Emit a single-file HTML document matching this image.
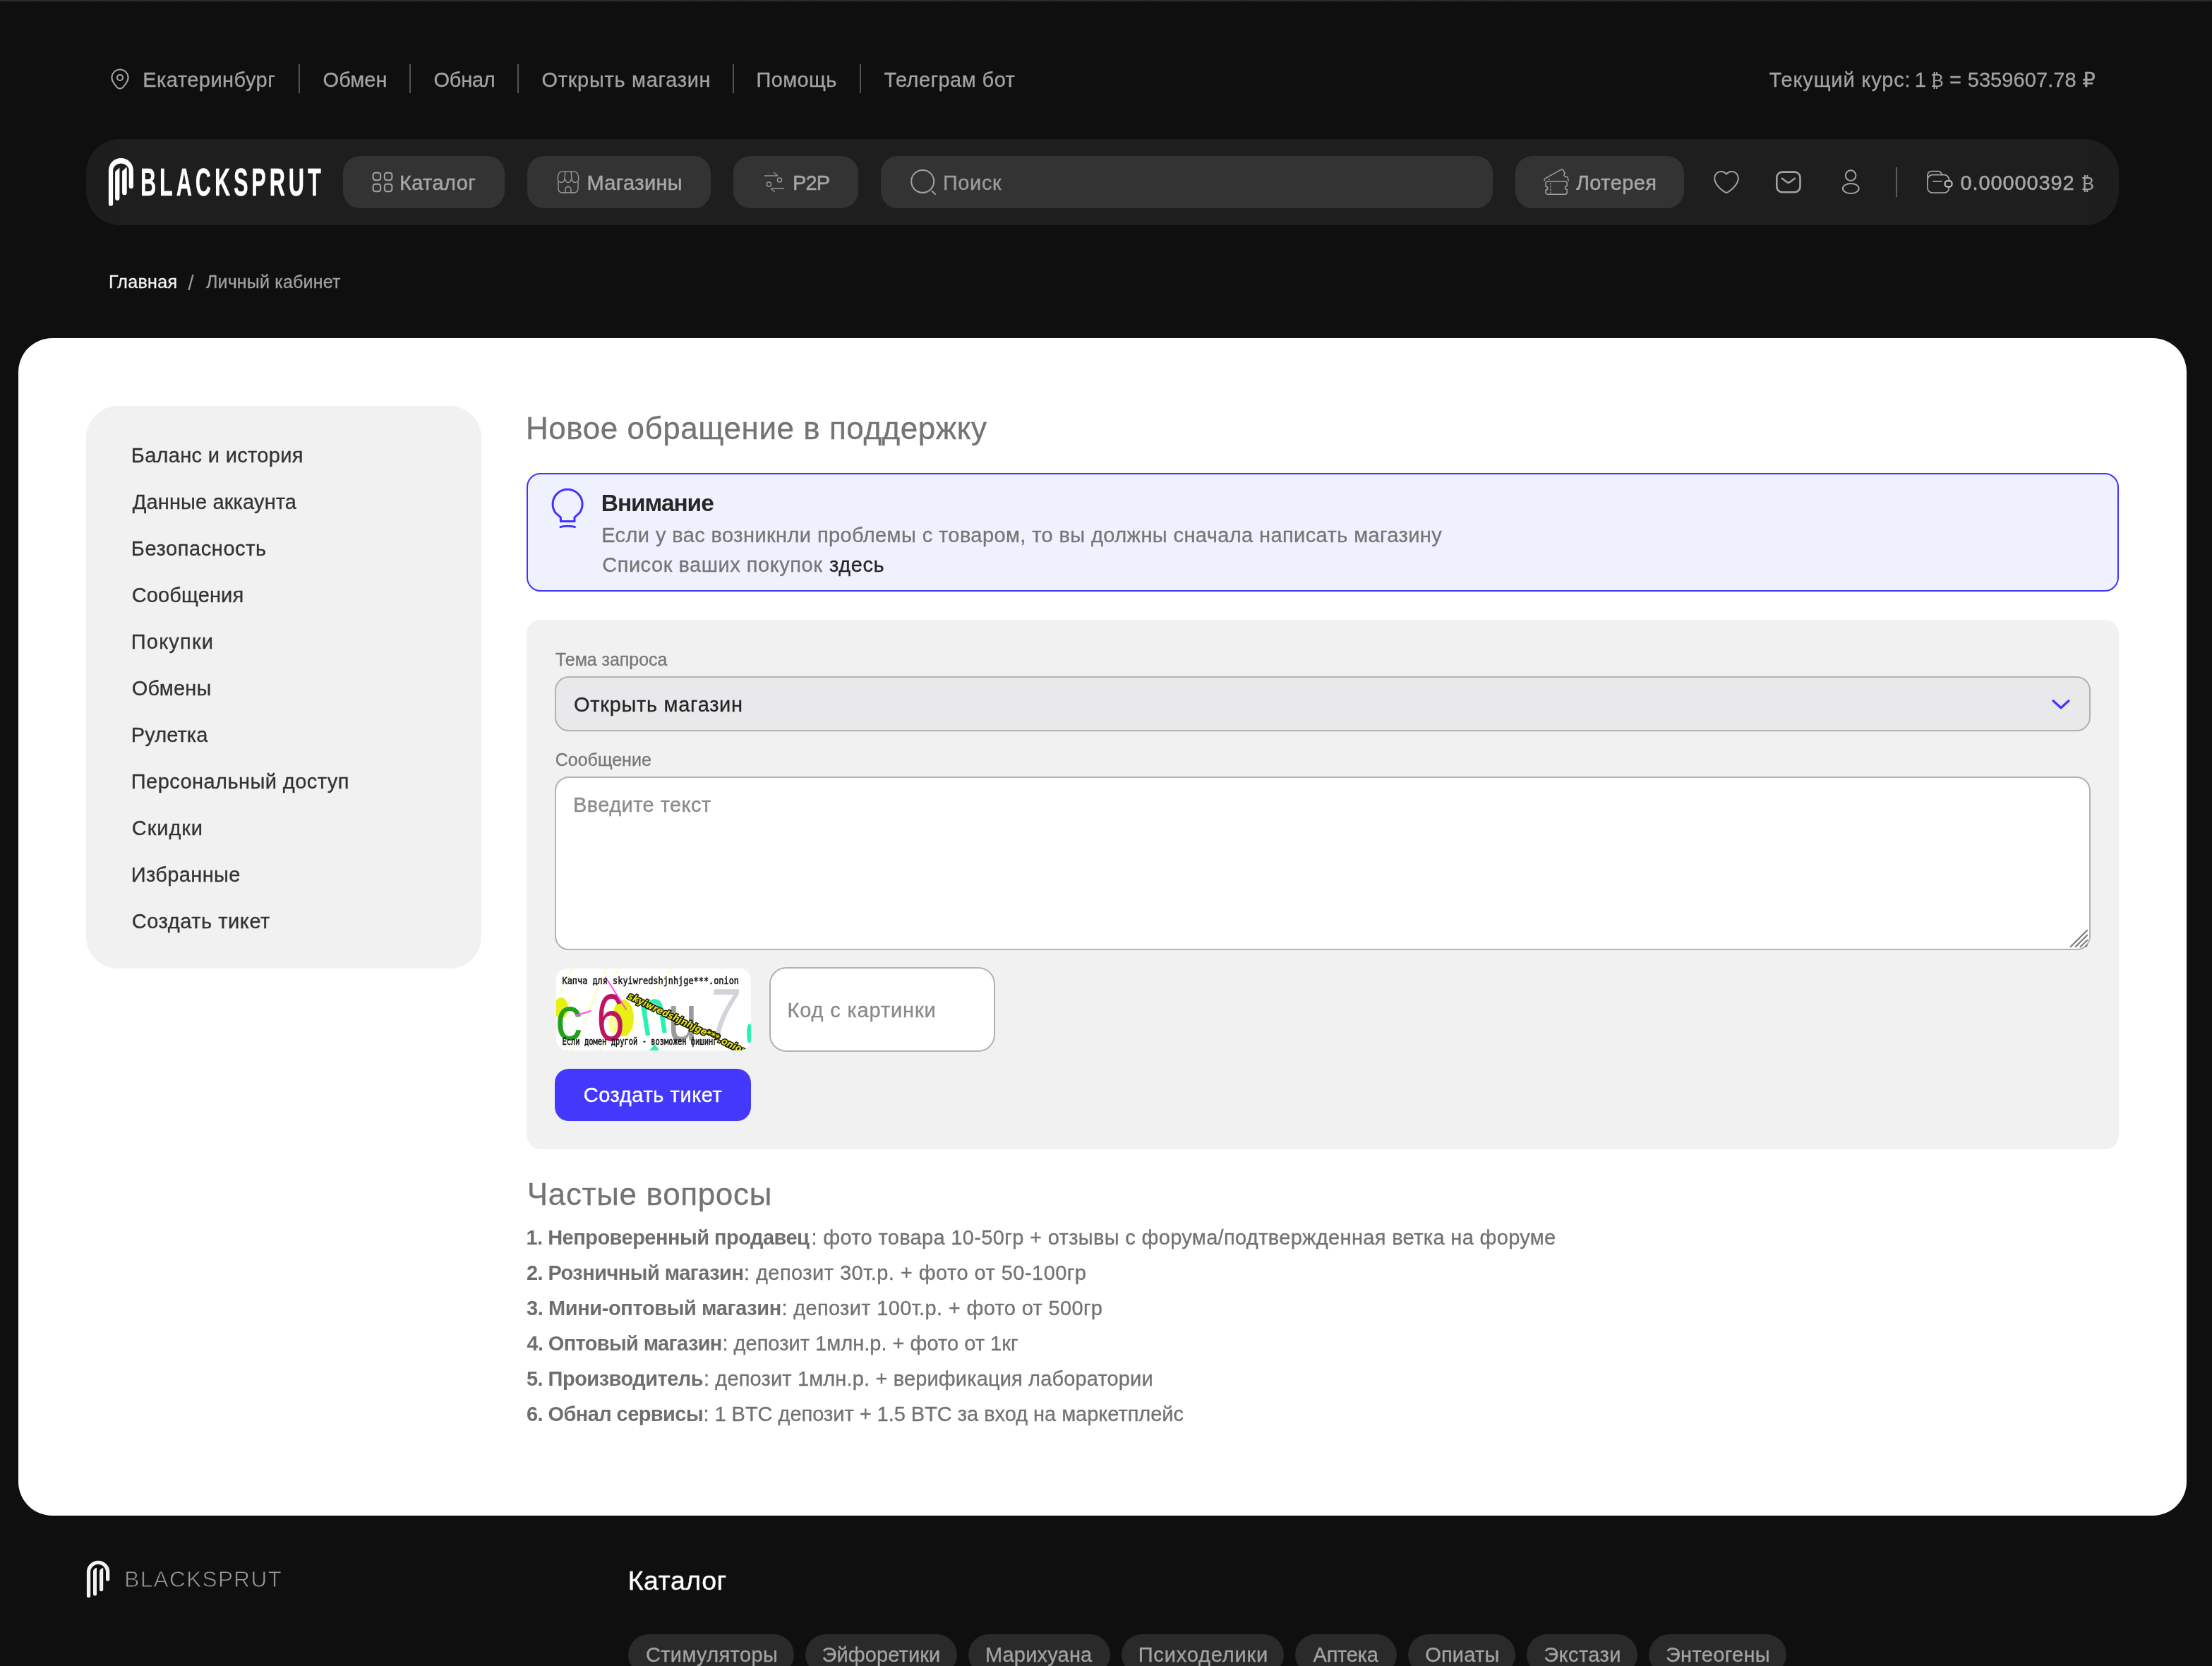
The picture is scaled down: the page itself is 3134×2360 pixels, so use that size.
<!DOCTYPE html>
<html lang="ru">
<head>
<meta charset="utf-8">
<title>Новое обращение в поддержку</title>
<style>
*{box-sizing:border-box;margin:0;padding:0}
html,body{width:3134px;height:2360px;overflow:hidden;background:#0f0f0f}
body{position:relative;font-family:'Liberation Sans','DejaVu Sans',sans-serif;-webkit-font-smoothing:antialiased}
#page{position:absolute;left:0;top:0;width:3134px;height:2360px;overflow:hidden;will-change:transform}
.t{position:absolute;white-space:pre;line-height:1;display:block;-webkit-text-stroke:0.300px}
.abs{position:absolute}
.topline{position:absolute;left:0;top:0;width:3134px;height:2px;background-color:#252525;background-image:linear-gradient(90deg,#3d3d3d 1px,transparent 1px),linear-gradient(90deg,#3d3d3d 1px,transparent 1px);background-size:4px 1px,4px 1px;background-position:2px 0,0 1px;background-repeat:repeat-x}
.sep{position:absolute;width:2px;background:#545454}
.navbar{position:absolute;left:122px;top:197px;width:2880px;height:122px;border-radius:48px;background:#1e1e1e}
.dots{position:absolute;top:0;width:50px;height:122px;opacity:.7;background-image:radial-gradient(circle,rgba(6,6,6,.5) 0.500px,transparent 1px),radial-gradient(circle,rgba(6,6,6,.5) 0.500px,transparent 1px);background-size:6px 6px,6px 6px;background-position:0 0,3px 3px}
.dots.l{left:0;border-radius:48px 0 0 48px;-webkit-mask-image:linear-gradient(to right,#000 55%,transparent);mask-image:linear-gradient(to right,#000 55%,transparent)}
.dots.r{right:0;border-radius:0 48px 48px 0;-webkit-mask-image:linear-gradient(to left,#000 55%,transparent);mask-image:linear-gradient(to left,#000 55%,transparent)}
.nbtn{position:absolute;top:221px;height:74px;border-radius:24px;background:#333}
.panel{position:absolute;left:26px;top:479px;width:3072px;height:1668px;border-radius:48px;background:#fff}
.side{position:absolute;left:122px;top:575px;width:560px;height:797px;border-radius:45px;background:#f1f1f1}
.alert{position:absolute;left:746px;top:670px;width:2256px;height:168px;border-radius:20px;background:#eff1ff;border:2px solid #4233ff}
.form{position:absolute;left:746px;top:878px;width:2256px;height:750px;border-radius:20px;background:#f1f1f1}
.select{position:absolute;left:786px;top:958px;width:2176px;height:78px;border-radius:20px;background:#e9e9eb;border:2px solid #b2b2b2}
.area{position:absolute;left:786px;top:1100px;width:2176px;height:246px;border-radius:20px;background:#fff;border:2px solid #b2b2b2}
.code{position:absolute;left:1090px;top:1370px;width:320px;height:120px;border-radius:24px;background:#fff;border:2px solid #b2b2b2}
.btn{position:absolute;left:786px;top:1514px;width:278px;height:74px;border-radius:20px;background:#4338fc}
.chip{position:absolute;top:2315px;height:58px;border-radius:29px;background:#2a2a2a}
svg{position:absolute;overflow:visible}
</style>
</head>
<body>
<div id="page">
<div class="topline"></div>
<header>
<svg style="left:156px;top:96px" width="28" height="32" viewBox="0 0 28 32" fill="none" stroke="#a3a3a3" stroke-width="2"><path d="M14 2.6c6.6 0 11.6 5 11.6 11.4 0 3.4-1.6 6.2-3.6 8.8l-3.6 4.6c-2.2 2.9-6.6 2.9-8.8 0L6 22.8C4 20.200 2.400 17.400 2.400 14 2.400 7.600 7.400 2.600 14 2.600z"/><circle cx="14" cy="13.9" r="4"/></svg>
<span class="t" style="left:202.2px;top:99px;font-size:29px;color:#a3a3a3;letter-spacing:0.47px;">Екатеринбург</span>
<div class="sep" style="left:423px;top:91px;height:41px"></div>
<span class="t" style="left:457.6px;top:99px;font-size:29px;color:#a3a3a3;letter-spacing:0.1px;">Обмен</span>
<div class="sep" style="left:580px;top:91px;height:41px"></div>
<span class="t" style="left:614.6px;top:99px;font-size:29px;color:#a3a3a3;letter-spacing:-0.3px;">Обнал</span>
<div class="sep" style="left:733px;top:91px;height:41px"></div>
<span class="t" style="left:767.4px;top:99px;font-size:29px;color:#a3a3a3;letter-spacing:0.71px;">Открыть магазин</span>
<div class="sep" style="left:1038px;top:91px;height:41px"></div>
<span class="t" style="left:1071.4px;top:99px;font-size:29px;color:#a3a3a3;letter-spacing:0.4px;">Помощь</span>
<div class="sep" style="left:1218px;top:91px;height:41px"></div>
<span class="t" style="left:1252.4px;top:99px;font-size:29px;color:#a3a3a3;letter-spacing:0.45px;">Телеграм бот</span>
<span class="t" style="left:2506.5px;top:99px;font-size:29px;color:#a3a3a3;letter-spacing:0.85px;">Текущий курс:</span>
<span class="t" style="left:2712.7px;top:99px;font-size:29px;color:#a3a3a3;letter-spacing:-4.7px;">1</span>
<span class="t" style="left:2735.2px;top:102px;font-size:25px;color:#a3a3a3;letter-spacing:-1.6px;font-family:'DejaVu Sans',sans-serif;-webkit-text-stroke:0;">₿</span>
<span class="t" style="left:2761.9px;top:99px;font-size:29px;color:#a3a3a3;letter-spacing:-2.9px;">=</span>
<span class="t" style="left:2787.7px;top:99px;font-size:29px;color:#a3a3a3;letter-spacing:0.08px;">5359607.78</span>
<span class="t" style="left:2950.5px;top:99px;font-size:29px;color:#a3a3a3;letter-spacing:-0.1px;">₽</span>
</header>
<nav>
<div class="navbar"><i class="dots l"></i><i class="dots r"></i></div>
<svg style="left:150px;top:220px" width="44" height="76" viewBox="150 220 44 76"><path d="M153.900 288.700V241.400A17.500 17.500 0 0 1 188.900 241.400V263.900a3.100 3.100 0 0 1-6.200 0V241.400A11.300 9.900 0 0 0 160.100 241.400V288.700a3.100 3.100 0 0 1-6.200 0z" fill="#fff"/><path d="M163.100 243.200L169.400 237.500V280.850a3.150 3.150 0 0 1-6.300 0z" fill="#fff"/><path d="M173.100 242.600L179.700 236.500V272.900a3.300 3.300 0 0 1-6.600 0z" fill="#fff"/></svg>
<span class="t" id="logotxt" style="left:199.200px;top:230px;font-size:56px;font-weight:700;color:#fff;letter-spacing:8.800px;transform:scaleX(0.550);transform-origin:0 0">BLACKSPRUT</span>
<div class="nbtn" style="left:486px;width:229px"></div>
<svg style="left:526px;top:242px" width="32" height="32" viewBox="526 242 32 32" fill="none" stroke="#a3a3a3" stroke-width="2"><rect x="528.600" y="244.800" width="10.600" height="10.400" rx="3.400"/><rect x="544.800" y="244.800" width="10.600" height="10.400" rx="3.400"/><rect x="528.600" y="260.800" width="10.600" height="10.400" rx="3.400"/><rect x="544.800" y="260.800" width="10.600" height="10.400" rx="3.400"/></svg>
<span class="t" style="left:565.9px;top:245px;font-size:29px;color:#a6a6a6;letter-spacing:0.42px;-webkit-text-stroke:0.500px #a6a6a6;">Каталог</span>
<div class="nbtn" style="left:747px;width:260px"></div>
<svg style="left:788px;top:240px" width="36" height="36" viewBox="788 240 36 36" fill="none" stroke="#a0a0a0" stroke-width="1.300"><path d="M791 257v9.500c0 4 2.500 6.500 6.500 6.500h15c4 0 6.500-2.500 6.500-6.500V257"/><path d="M798 242.800h14c4.500 0 6.800 2 7.300 6.500l.4 4c.3 2.800-1.800 5-4.600 5-2.600 0-4.700-1.900-5-4.500l-1-11h-8.200l-1 11c-.3 2.600-2.400 4.500-5 4.500-2.800 0-4.900-2.200-4.600-5l.4-4c.5-4.500 2.800-6.500 7.300-6.500z"/><path d="M800.800 253.800c.3 2.600 1.900 4.500 4.200 4.500s3.900-1.900 4.200-4.500"/><path d="M801 273v-4.500a4 4 0 0 1 8 0V273"/></svg>
<span class="t" style="left:831.4px;top:245px;font-size:29px;color:#a6a6a6;letter-spacing:0.37px;-webkit-text-stroke:0.500px #a6a6a6;">Магазины</span>
<div class="nbtn" style="left:1039px;width:177px"></div>
<svg style="left:1080px;top:240px" width="36" height="36" viewBox="1080 240 36 36" fill="none" stroke="#949494" stroke-width="1.500" stroke-linejoin="bevel"><path d="M1083 249h18.800M1096.300 244.200l5.600 4.800"/><path d="M1111 267h-18.800M1097.700 271.800l-5.600-4.800"/><circle cx="1104.500" cy="255" r="3.100" stroke-width="1.300" stroke="#a0a0a0"/><circle cx="1089.500" cy="261" r="3.100" stroke-width="1.300" stroke="#a0a0a0"/></svg>
<span class="t" style="left:1122.9px;top:245px;font-size:29px;color:#a6a6a6;letter-spacing:-0.75px;-webkit-text-stroke:0.500px #a6a6a6;">P2P</span>
<div class="nbtn" style="left:1248px;width:867px"></div>
<svg style="left:1288px;top:238px" width="40" height="40" viewBox="1288 238 40 40" fill="none" stroke="#a3a3a3" stroke-width="2" stroke-linecap="round"><circle cx="1307.200" cy="256.900" r="16"/><path d="M1320.600 270.800l4.400 4.300"/></svg>
<span class="t" style="left:1335.9px;top:245px;font-size:29px;color:#9c9c9c;letter-spacing:0.62px;">Поиск</span>
<div class="nbtn" style="left:2147px;width:239px"></div>
<svg style="left:2184px;top:236px" width="42" height="44" viewBox="2184 236 42 44" fill="none" stroke="#a0a0a0" stroke-width="1.500" stroke-linejoin="round"><path d="M2193 257h24.200c2 0 3 1 3 3v3.600c-1.500 0-2.700 1-2.700 2.500s1.200 2.500 2.700 2.500v3.600c0 2-1 3-3 3H2193c-2 0-3-1-3-3V269.200c1.500 0 2.700-1 2.700-2.500s-1.200-2.500-2.700-2.500V260c0-2 1-3 3-3z"/><path d="M2196.800 259.200v14.600" stroke-dasharray="2.400 1.800" stroke-width="1.200"/><path d="M2188.300 256.600c-.6-2 .2-3.400 1.600-4.200l21.300-11.800c1.600-.8 3.200-.4 4.100 1.200l1.900 3.500c-1.300 1-1.700 2.500-.9 3.800s2.400 1.600 3.800 1.100c1.500 1.600 2.200 3.900 1.800 6.600"/><path d="M2194.200 253.200l1.600 1.600" stroke-width="1.200"/></svg>
<span class="t" style="left:2232.9px;top:245px;font-size:29px;color:#a6a6a6;letter-spacing:0.42px;-webkit-text-stroke:0.500px #a6a6a6;">Лотерея</span>
<svg style="left:2426px;top:240px" width="40" height="36" viewBox="2426 240 40 36" fill="none" stroke="#a3a3a3" stroke-width="2" stroke-linejoin="round"><path d="M2446 273c-1.200-.4-16.800-9-16.800-20.600 0-5.300 4.100-9.500 9.200-9.500 3 0 5.800 1.500 7.600 3.800 1.800-2.300 4.600-3.800 7.600-3.800 5.100 0 9.200 4.200 9.200 9.500 0 11.600-15.600 20.200-16.800 20.600z"/></svg>
<svg style="left:2514px;top:240px" width="40" height="36" viewBox="2514 240 40 36" fill="none" stroke="#a3a3a3" stroke-width="2.600" stroke-linecap="round" stroke-linejoin="round"><rect x="2517.300" y="243.600" width="33.200" height="28.700" rx="8"/><path d="M2524.800 252.800l7 5.200c1.200.9 2.800.9 4 0l7-5.200" stroke-width="2.400"/></svg>
<svg style="left:2606px;top:238px" width="34" height="40" viewBox="2606 238 34 40" fill="none" stroke="#a3a3a3" stroke-width="2"><circle cx="2622.100" cy="248.600" r="7.300"/><ellipse cx="2622.300" cy="267" rx="11.400" ry="7.100"/></svg>
<div class="sep" style="left:2686px;top:237px;height:42px;background:#5e5e5e"></div>
<svg style="left:2728px;top:240px" width="40" height="36" viewBox="2728 240 40 36" fill="none" stroke="#a3a3a3" stroke-width="1.800" stroke-linecap="round"><rect x="2731" y="247.600" width="30.400" height="25.600" rx="7"/><path d="M2731 253.500v-4.500c0-4 2.300-6.300 6.300-6.300h7.700c3.600 0 5.800 1.700 6.400 5"/><path d="M2738.800 256.800h12"/><rect x="2755.600" y="256.300" width="10" height="8.400" rx="3.600" fill="#1e1e1e" stroke="#cfcfcf" stroke-width="2"/></svg>
<span class="t" style="left:2777.5px;top:245px;font-size:29px;color:#a6a6a6;letter-spacing:0.88px;-webkit-text-stroke:0.500px #a6a6a6;">0.00000392</span>
<span class="t" style="left:2948.4px;top:248px;font-size:25px;color:#a6a6a6;letter-spacing:-1.0px;font-family:'DejaVu Sans',sans-serif;-webkit-text-stroke:0;">₿</span>
</nav>
<div>
<span class="t" style="left:153.9px;top:387px;font-size:25px;color:#f2f2f2;letter-spacing:0.32px;">Главная</span>
<span class="t" style="left:266.2px;top:386px;font-size:30px;color:#9a9a9a;letter-spacing:0.2px;-webkit-text-stroke:0;">/</span>
<span class="t" style="left:291.9px;top:387px;font-size:25px;color:#a0a0a0;letter-spacing:0.19px;">Личный кабинет</span>
</div>
<main>
<div class="panel"></div>
<aside><div class="side"></div>
<span class="t" style="left:185.8px;top:631px;font-size:29px;color:#333;letter-spacing:0.32px;">Баланс и история</span>
<span class="t" style="left:187.8px;top:697px;font-size:29px;color:#333;letter-spacing:0.13px;">Данные аккаунта</span>
<span class="t" style="left:185.8px;top:763px;font-size:29px;color:#333;letter-spacing:0.58px;">Безопасность</span>
<span class="t" style="left:186.8px;top:829px;font-size:29px;color:#333;letter-spacing:0.12px;">Сообщения</span>
<span class="t" style="left:185.8px;top:895px;font-size:29px;color:#333;letter-spacing:1.18px;">Покупки</span>
<span class="t" style="left:186.8px;top:961px;font-size:29px;color:#333;letter-spacing:0.24px;">Обмены</span>
<span class="t" style="left:185.8px;top:1027px;font-size:29px;color:#333;letter-spacing:0.1px;">Рулетка</span>
<span class="t" style="left:185.8px;top:1093px;font-size:29px;color:#333;letter-spacing:0.44px;">Персональный доступ</span>
<span class="t" style="left:186.8px;top:1159px;font-size:29px;color:#333;letter-spacing:0.92px;">Скидки</span>
<span class="t" style="left:185.8px;top:1225px;font-size:29px;color:#333;letter-spacing:0.37px;">Избранные</span>
<span class="t" style="left:186.8px;top:1291px;font-size:29px;color:#333;letter-spacing:0.53px;">Создать тикет</span>
</aside>
<section>
<span class="t" style="left:745.0px;top:585px;font-size:44px;color:#747474;letter-spacing:0.54px;">Новое обращение в поддержку</span>
<div class="alert"></div>
<svg style="left:778px;top:688px" width="52" height="64" viewBox="778 688 52 64" fill="none" stroke="#4233ff" stroke-width="3" stroke-linecap="round" stroke-linejoin="round"><path d="M794.400 738.400h19.600v-5.600l7-6.100a21 21 0 1 0-33.800 0l7.200 6.100z"/><path d="M794 746.600c3.500-1.900 16.900-1.900 20.400 0"/></svg>
<span class="t" style="left:851.8px;top:696px;font-size:33.5px;color:#272727;letter-spacing:-1.07px;font-weight:700;-webkit-text-stroke:0;">Внимание</span>
<span class="t" style="left:852.2px;top:744px;font-size:29px;color:#767676;letter-spacing:0.4px;">Если у вас возникнли проблемы с товаром, то вы должны сначала написать магазину</span>
<span class="t" style="left:853.2px;top:786px;font-size:29px;color:#767676;letter-spacing:0.53px;">Список ваших покупок</span>
<span class="t" style="left:1175.1px;top:786px;font-size:29px;color:#252525;letter-spacing:0.55px;">здесь</span>
<div class="form"></div>
<span class="t" style="left:787.0px;top:922px;font-size:25px;color:#777;letter-spacing:-0.05px;">Тема запроса</span>
<div class="select"></div>
<span class="t" style="left:813.1px;top:984px;font-size:29px;color:#252525;letter-spacing:0.69px;">Открыть магазин</span>
<svg style="left:2904px;top:986px" width="34" height="24" viewBox="2904 986 34 24" fill="none" stroke="#4233ff" stroke-width="3" stroke-linecap="round" stroke-linejoin="round"><path d="M2909 992.800l11 10 11-10" stroke-width="3.200"/></svg>
<span class="t" style="left:786.7px;top:1064px;font-size:25px;color:#777;letter-spacing:0.01px;">Сообщение</span>
<div class="area"></div>
<span class="t" style="left:812.1px;top:1126px;font-size:29px;color:#8a8a8a;letter-spacing:0.42px;">Введите текст</span>
<svg style="left:2930px;top:1314px" width="30" height="30" viewBox="2930 1314 30 30" fill="none" stroke="#7c7c7c" stroke-width="2.200" stroke-linecap="round"><path d="M2933.800 1341l23.400-23.200M2940.800 1341l16.400-16.200M2947.800 1341l9.400-9.200M2955.200 1340.600l1.600-1.600"/></svg>
<div class="abs" id="captcha" style="left:788px;top:1372px;width:276px;height:116px;border-radius:16px;background:#fff;overflow:hidden"><svg width="276" height="116" viewBox="0 0 276 116" style="left:0;top:0">
<rect x="-1" y="-1" width="280" height="119" fill="#fff"/>
<g stroke="#ffffb0" stroke-width="2.400" stroke-dasharray="9 5" opacity="0.9"><path d="M22 0L6 34"/><path d="M71 0L45 62"/><path d="M89 0L82 14"/><path d="M163 0L135 40"/><path d="M58 30L38 80"/><path d="M36 88L20 116"/><path d="M72 100L62 116"/><path d="M118 70L88 116"/><path d="M22 42L12 60"/></g>
<ellipse cx="7" cy="56" rx="10" ry="15" fill="#e8f013"/>
<ellipse cx="95" cy="70" rx="15" ry="26" fill="#e8f013"/>
<ellipse cx="83" cy="78" rx="9" ry="14" fill="#fdfda0"/>
<path d="M132 116l8-9 6 9z" fill="#2af0b0"/>
<ellipse cx="274" cy="92" rx="4" ry="14" fill="#2af0b0"/>
<text x="-1" y="101" font-family="'Liberation Sans',sans-serif" font-size="88" fill="#22a11c" textLength="38" lengthAdjust="spacingAndGlyphs">c</text>
<text x="57" y="102" font-family="'Liberation Sans',sans-serif" font-size="94" fill="#bf1561" textLength="40" lengthAdjust="spacingAndGlyphs">6</text>
<text x="0" y="0" font-family="'Liberation Sans',sans-serif" font-size="92" fill="#2af0b0" textLength="40" lengthAdjust="spacingAndGlyphs" transform="translate(122,96) rotate(-9)">n</text>
<text x="158" y="102" font-family="'Liberation Sans',sans-serif" font-size="92" fill="#9b9b9b" textLength="42" lengthAdjust="spacingAndGlyphs">u</text>
<text x="215" y="101" font-family="'Liberation Sans',sans-serif" font-size="104" font-style="italic" fill="#d2d2d8" textLength="42" lengthAdjust="spacingAndGlyphs">7</text>
<path d="M69.500 11.800l30.200 47" stroke="#ff44e8" stroke-width="1.800" fill="none"/>
<path d="M27.600 66.600l22-6.800" stroke="#ff5ce8" stroke-width="2.400" fill="none"/>
<text x="8.500" y="21.700" font-family="'DejaVu Sans Mono','Liberation Mono',monospace" font-size="14" fill="#111" stroke="#111" stroke-width="0.500" textLength="250.500" lengthAdjust="spacingAndGlyphs">Капча для skyiwredshjnhjge***.onion</text>
<text x="8.500" y="107.900" font-family="'DejaVu Sans Mono','Liberation Mono',monospace" font-size="14" fill="#111" stroke="#111" stroke-width="0.500" textLength="220" lengthAdjust="spacingAndGlyphs">Если домен другой - возможен фишинг</text>
<text x="0" y="0" font-family="'DejaVu Sans','Liberation Sans',sans-serif" font-size="13.500" font-style="italic" font-weight="700" fill="#e6e610" stroke="#111" stroke-width="3" paint-order="stroke" textLength="186" lengthAdjust="spacingAndGlyphs" transform="translate(100.500,42) rotate(25.700)">skyiwredshjnhjge***.onion</text>
</svg></div>
<div class="code"></div>
<span class="t" style="left:1115.5px;top:1417px;font-size:29px;color:#8a8a8a;letter-spacing:0.84px;">Код с картинки</span>
<div class="btn"></div>
<span class="t" style="left:826.7px;top:1537px;font-size:29px;color:#fff;letter-spacing:0.58px;-webkit-text-stroke:0.400px #fff;">Создать тикет</span>
<span class="t" style="left:746.8px;top:1670px;font-size:44px;color:#747474;letter-spacing:0.65px;">Частые вопросы</span>
<p><span class="t" style="left:745.5px;top:1739px;font-size:29px;color:#6e6e6e;letter-spacing:-0.52px;font-weight:700;-webkit-text-stroke:0;">1. Непроверенный продавец</span><span class="t" style="left:1149.4px;top:1739px;font-size:29px;color:#727272;letter-spacing:0.34px;">: фото товара 10-50гр + отзывы с форума/подтвержденная ветка на форуме</span></p>
<p><span class="t" style="left:745.9px;top:1789px;font-size:29px;color:#6e6e6e;letter-spacing:-0.55px;font-weight:700;-webkit-text-stroke:0;">2. Розничный магазин</span><span class="t" style="left:1053.9px;top:1789px;font-size:29px;color:#727272;letter-spacing:0.46px;">: депозит 30т.р. + фото от 50-100гр</span></p>
<p><span class="t" style="left:745.9px;top:1839px;font-size:29px;color:#6e6e6e;letter-spacing:-0.39px;font-weight:700;-webkit-text-stroke:0;">3. Мини-оптовый магазин</span><span class="t" style="left:1107.4px;top:1839px;font-size:29px;color:#727272;letter-spacing:0.34px;">: депозит 100т.р. + фото от 500гр</span></p>
<p><span class="t" style="left:746.4px;top:1889px;font-size:29px;color:#6e6e6e;letter-spacing:-0.64px;font-weight:700;-webkit-text-stroke:0;">4. Оптовый магазин</span><span class="t" style="left:1023.4px;top:1889px;font-size:29px;color:#727272;letter-spacing:0.02px;">: депозит 1млн.р. + фото от 1кг</span></p>
<p><span class="t" style="left:745.9px;top:1939px;font-size:29px;color:#6e6e6e;letter-spacing:-0.51px;font-weight:700;-webkit-text-stroke:0;">5. Производитель</span><span class="t" style="left:996.9px;top:1939px;font-size:29px;color:#727272;letter-spacing:0.15px;">: депозит 1млн.р. + верификация лаборатории</span></p>
<p><span class="t" style="left:745.9px;top:1989px;font-size:29px;color:#6e6e6e;letter-spacing:-0.57px;font-weight:700;-webkit-text-stroke:0;">6. Обнал сервисы</span><span class="t" style="left:996.4px;top:1989px;font-size:29px;color:#727272;letter-spacing:-0.03px;">: 1 BTC депозит + 1.5 BTC за вход на маркетплейс</span></p>
</section>
</main>
<footer>
<svg style="left:120px;top:2206px" width="40" height="62" viewBox="120 2206 40 62"><path d="M125.550 2260.400V2226.900a13.550 13.550 0 0 1 27.100 0V2237.100" fill="none" stroke="#f1f1f1" stroke-width="5.300" stroke-linecap="round"/><path d="M132 2225.600Q132.600 2221.800 137 2220.700V2258.100a2.500 2.500 0 0 1-5 0z" fill="#f1f1f1"/><path d="M141 2226.200Q141.600 2222.300 146.200 2221.100V2251.600a2.600 2.600 0 0 1-5.200 0z" fill="#f1f1f1"/></svg>
<span class="t" style="left:176.3px;top:2222px;font-size:31.5px;color:#9a9a9a;letter-spacing:1.39px;-webkit-text-stroke:0.800px #0f0f0f;">BLACKSPRUT</span>
<span class="t" style="left:889.7px;top:2221px;font-size:37.5px;color:#fff;letter-spacing:0.53px;-webkit-text-stroke:0.400px #fff;">Каталог</span>
<div class="chip" style="left:890.0px;width:235.0px"></div>
<span class="t" style="left:914.9px;top:2330px;font-size:29px;color:#a3a3a3;letter-spacing:0.36px;">Стимуляторы</span>
<div class="chip" style="left:1141.0px;width:214.8px"></div>
<span class="t" style="left:1164.5px;top:2330px;font-size:29px;color:#a3a3a3;letter-spacing:0.12px;">Эйфоретики</span>
<div class="chip" style="left:1371.8px;width:201.0px"></div>
<span class="t" style="left:1395.9px;top:2330px;font-size:29px;color:#a3a3a3;letter-spacing:0.18px;">Марихуана</span>
<div class="chip" style="left:1589.0px;width:230.0px"></div>
<span class="t" style="left:1612.7px;top:2330px;font-size:29px;color:#a3a3a3;letter-spacing:0.83px;">Психоделики</span>
<div class="chip" style="left:1834.9px;width:144.1px"></div>
<span class="t" style="left:1860.6px;top:2330px;font-size:29px;color:#a3a3a3;letter-spacing:-0.28px;">Аптека</span>
<div class="chip" style="left:1995.0px;width:151.8px"></div>
<span class="t" style="left:2019.2px;top:2330px;font-size:29px;color:#a3a3a3;letter-spacing:0.2px;">Опиаты</span>
<div class="chip" style="left:2163.0px;width:157.0px"></div>
<span class="t" style="left:2187.3px;top:2330px;font-size:29px;color:#a3a3a3;letter-spacing:0.43px;">Экстази</span>
<div class="chip" style="left:2336.2px;width:194.8px"></div>
<span class="t" style="left:2359.9px;top:2330px;font-size:29px;color:#a3a3a3;letter-spacing:0.34px;">Энтеогены</span>
</footer>
</div>
</body>
</html>
